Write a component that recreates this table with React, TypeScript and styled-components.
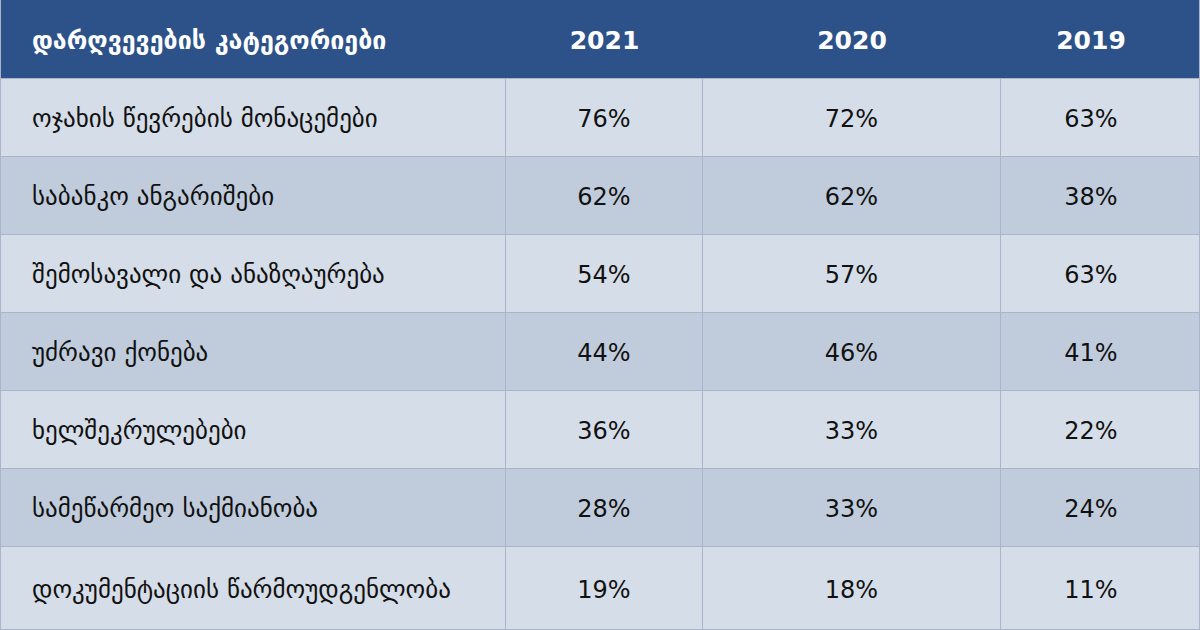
import React from "react";
import styled, { createGlobalStyle } from "styled-components";

const GlobalStyle = createGlobalStyle`
  html, body {
    margin: 0;
    padding: 0;
    background: #ffffff;
  }
  body {
    font-family: "DejaVu Sans", "Noto Sans", sans-serif;
  }
`;

const Table = styled.div`
  width: 1200px;
  height: 630px;
  display: grid;
  grid-template-columns: 505px 197px 298px 200px;
  grid-template-rows: 78px repeat(6, 78px) 84px;
  box-sizing: border-box;
  border-left: 1px solid #aab4cb;
  border-right: 1px solid #aab4cb;
  border-bottom: 1px solid #aab4cb;
  overflow: hidden;
`;

const HeadCell = styled.div<{ $first?: boolean; $last?: boolean }>`
  background: #2c5289;
  color: #ffffff;
  font-weight: bold;
  font-size: 25px;
  display: flex;
  align-items: center;
  justify-content: ${(p) => (p.$first ? "flex-start" : "center")};
  padding: 3px ${(p) => (p.$last ? "20px" : "0")} 0
    ${(p) => (p.$first ? "31px" : "0")};
`;

const Cell = styled.div<{ $first?: boolean; $alt?: boolean; $last?: boolean }>`
  background: ${(p) => (p.$alt ? "#c0ccdc" : "#d5dde8")};
  color: #111111;
  font-size: ${(p) => (p.$first ? "25px" : "24px")};
  display: flex;
  align-items: center;
  justify-content: ${(p) => (p.$first ? "flex-start" : "center")};
  padding: 2px ${(p) => (p.$last ? "20px" : "0")} 0
    ${(p) => (p.$first ? "31px" : "0")};
  box-sizing: border-box;
  border-top: 1px solid #aab4cb;
  border-right: ${(p) => (p.$last ? "none" : "1px solid #aab4cb")};
`;

const rows: [string, string, string, string][] = [
  ["ოჯახის წევრების მონაცემები", "76%", "72%", "63%"],
  ["საბანკო ანგარიშები", "62%", "62%", "38%"],
  ["შემოსავალი და ანაზღაურება", "54%", "57%", "63%"],
  ["უძრავი ქონება", "44%", "46%", "41%"],
  ["ხელშეკრულებები", "36%", "33%", "22%"],
  ["სამეწარმეო საქმიანობა", "28%", "33%", "24%"],
  ["დოკუმენტაციის წარმოუდგენლობა", "19%", "18%", "11%"],
];

const App: React.FC = () => {
  return (
    <>
      <GlobalStyle />
      <Table>
        <HeadCell $first>დარღვევების კატეგორიები</HeadCell>
        <HeadCell>2021</HeadCell>
        <HeadCell>2020</HeadCell>
        <HeadCell $last>2019</HeadCell>
        {rows.map((row, i) =>
          row.map((value, j) => (
            <Cell
              key={`${i}-${j}`}
              $first={j === 0}
              $alt={i % 2 === 1}
              $last={j === 3}
            >
              {value}
            </Cell>
          ))
        )}
      </Table>
    </>
  );
};

export default App;
